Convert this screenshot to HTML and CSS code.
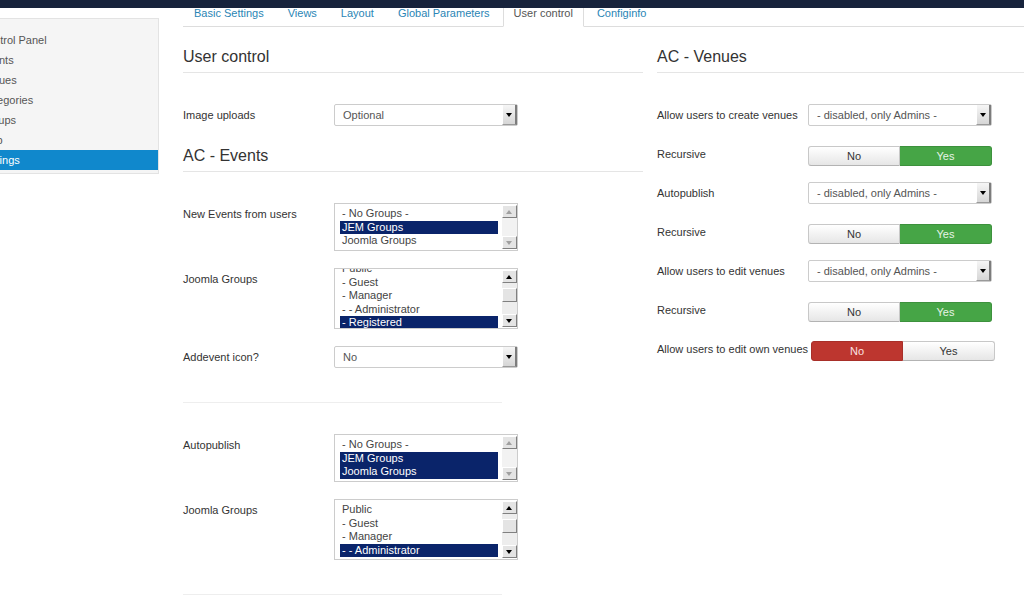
FILE: index.html
```html
<!DOCTYPE html>
<html lang="en">
<head>
    <meta charset="UTF-8">
    <title>JEM - Settings</title>
    <link rel="stylesheet" href="styles.css">
</head>
<body>

<div class="navbar"></div>

<div class="page">
    <div class="sidebar">
        <ul class="nav-list">
            <li>Control Panel</li>
            <li>Events</li>
            <li>Venues</li>
            <li>Categories</li>
            <li>Groups</li>
            <li>Help</li>
            <li class="active">Settings</li>
        </ul>
    </div>

    <div class="main">
        <ul class="tabs">
            <li>Basic Settings</li>
            <li>Views</li>
            <li>Layout</li>
            <li>Global Parameters</li>
            <li class="active">User control</li>
            <li>Configinfo</li>
        </ul>

        <div class="tab-content">
            <div class="col col-left">
                <h3>User control</h3>
                <div class="control-group">
                    <label class="control-label">Image uploads</label>
                    <div class="select"><span>Optional</span><b class="select-btn"></b></div>
                </div>

                <h3>AC - Events</h3>
                <div class="control-group">
                    <label class="control-label">New Events from users</label>
                    <div class="listbox short">
                        <div class="options">
                            <div>- No Groups -</div>
                            <div class="sel">JEM Groups</div>
                            <div>Joomla Groups</div>
                        </div>
                        <div class="scrollbar off">
                            <span class="sb-btn up"></span><span class="sb-track"></span><span class="sb-btn down"></span>
                        </div>
                    </div>
                </div>
                <div class="control-group">
                    <label class="control-label">Joomla Groups</label>
                    <div class="listbox tall">
                        <div class="options scrolled">
                            <div>Public</div>
                            <div>- Guest</div>
                            <div>- Manager</div>
                            <div>- - Administrator</div>
                            <div class="sel">- Registered</div>
                            <div>- - Author</div>
                        </div>
                        <div class="scrollbar">
                            <span class="sb-btn up"></span><span class="sb-track"><i class="thumb"></i></span><span class="sb-btn down"></span>
                        </div>
                    </div>
                </div>
                <div class="control-group">
                    <label class="control-label">Addevent icon?</label>
                    <div class="select"><span>No</span><b class="select-btn"></b></div>
                </div>

                <hr>

                <div class="control-group">
                    <label class="control-label">Autopublish</label>
                    <div class="listbox short">
                        <div class="options">
                            <div>- No Groups -</div>
                            <div class="sel">JEM Groups</div>
                            <div class="sel">Joomla Groups</div>
                        </div>
                        <div class="scrollbar off">
                            <span class="sb-btn up"></span><span class="sb-track"></span><span class="sb-btn down"></span>
                        </div>
                    </div>
                </div>
                <div class="control-group">
                    <label class="control-label">Joomla Groups</label>
                    <div class="listbox tall">
                        <div class="options">
                            <div>Public</div>
                            <div>- Guest</div>
                            <div>- Manager</div>
                            <div class="sel">- - Administrator</div>
                            <div>- Registered</div>
                        </div>
                        <div class="scrollbar">
                            <span class="sb-btn up"></span><span class="sb-track"><i class="thumb"></i></span><span class="sb-btn down"></span>
                        </div>
                    </div>
                </div>

                <hr>
            </div>

            <div class="col col-right">
                <h3>AC - Venues</h3>
                <div class="control-group">
                    <label class="control-label">Allow users to create venues</label>
                    <div class="select"><span>- disabled, only Admins -</span><b class="select-btn"></b></div>
                </div>
                <div class="control-group">
                    <label class="control-label">Recursive</label>
                    <div class="toggle"><span class="btn">No</span><span class="btn yes">Yes</span></div>
                </div>
                <div class="control-group">
                    <label class="control-label">Autopublish</label>
                    <div class="select"><span>- disabled, only Admins -</span><b class="select-btn"></b></div>
                </div>
                <div class="control-group">
                    <label class="control-label">Recursive</label>
                    <div class="toggle"><span class="btn">No</span><span class="btn yes">Yes</span></div>
                </div>
                <div class="control-group">
                    <label class="control-label">Allow users to edit venues</label>
                    <div class="select"><span>- disabled, only Admins -</span><b class="select-btn"></b></div>
                </div>
                <div class="control-group">
                    <label class="control-label">Recursive</label>
                    <div class="toggle"><span class="btn">No</span><span class="btn yes">Yes</span></div>
                </div>
                <div class="control-group">
                    <label class="control-label">Allow users to edit own venues</label>
                    <div class="toggle"><span class="btn no">No</span><span class="btn">Yes</span></div>
                </div>
            </div>
        </div>
    </div>
</div>

</body>
</html>
```

FILE: styles.css
```css
body {
    margin: 0;
    height: 595px;
    overflow: hidden;
    font-family: "Liberation Sans", Arial, sans-serif;
    font-size: 11px;
    color: #333;
    background: #fff;
}
.navbar {
    height: 8px;
    background: #17233c;
}
.page {
    display: flex;
    align-items: flex-start;
}

/* sidebar, page is scrolled a bit to the right */
.sidebar {
    flex: none;
    box-sizing: border-box;
    width: 199px;
    margin: 10px 0 0 -40px;
    padding: 11px 0 3px;
    background: #f5f5f5;
    border: 1px solid #e3e3e3;
}
.nav-list {
    list-style: none;
    margin: 0;
    padding: 0;
}
.nav-list li {
    padding-left: 19px;
    line-height: 20px;
    color: #555;
}
.nav-list li.active {
    background: #1088cc;
    color: #fff;
}

.main {
    flex: 1;
    padding-left: 24px;
}
.tabs {
    display: flex;
    list-style: none;
    margin: 0;
    padding: 0;
    border-bottom: 1px solid #ddd;
}
.tabs li {
    padding: 0 10px 8px;
    margin: 0 2px -1px 0;
    line-height: 10px;
    color: #2a85b5;
    border: 1px solid transparent;
    border-top: 0;
}
.tabs li.active {
    color: #555;
    background: #fff;
    border-color: #ddd;
    border-bottom-color: #fff;
}

.tab-content {
    display: flex;
    gap: 14px;
}
.col-left {
    width: 460px;
}
.col-right {
    flex: 1;
}
.col h3 {
    margin: 20px 0 31px;
    padding-bottom: 5px;
    font-size: 16px;
    font-weight: normal;
    line-height: 20px;
    color: #333;
    border-bottom: 1px solid #e5e5e5;
}
.col hr {
    width: 319px;
    margin: 34px 0 31px;
    border: 0;
    border-top: 1px solid #eee;
}
.col hr:last-child {
    margin-bottom: 0;
}

.control-group {
    display: flex;
    align-items: flex-start;
    margin-bottom: 17px;
}
.control-label {
    flex: none;
    box-sizing: border-box;
    min-width: 151px;
    padding-right: 3px;
    line-height: 22px;
    white-space: nowrap;
}

.select {
    display: flex;
    box-sizing: border-box;
    width: 184px;
    height: 22px;
    border: 1px solid #ccc;
    border-radius: 2px;
    background: #fff;
    color: #555;
}
.select span {
    flex: 1;
    padding-left: 8px;
    line-height: 20px;
}
.select-btn {
    position: relative;
    width: 12px;
    background: linear-gradient(#f6f6f6, #d6d6d6);
    border-left: 1px solid #fff;
    border-right: 2px solid #7c7c7c;
    border-bottom: 1px solid #9a9a9a;
}
.select-btn::after {
    content: "";
    position: absolute;
    left: 3px;
    top: 8px;
    border-top: 4px solid #000;
    border-left: 3px solid transparent;
    border-right: 3px solid transparent;
}

.listbox {
    display: flex;
    box-sizing: border-box;
    width: 184px;
    padding-left: 5px;
    border: 1px solid #ccc;
    background: #fff;
}
.listbox.short {
    height: 48px;
}
.listbox.tall {
    height: 61px;
}
.options {
    flex: 1;
    margin-right: 4px;
    padding-top: 3px;
    overflow: hidden;
    color: #444;
    line-height: 13.5px;
}
.options div {
    padding-left: 2px;
    white-space: nowrap;
}
.options.scrolled div:first-child {
    margin-top: -10px;
}
.options .sel {
    background: #0a246a;
    color: #fff;
}

.scrollbar {
    display: flex;
    flex-direction: column;
    width: 15px;
    margin: 1px 0;
}
.sb-track {
    flex: 1;
    background: #ededed;
}
.sb-btn {
    position: relative;
    box-sizing: border-box;
    height: 13px;
    background: #e4e4e4;
    border: 1px solid;
    border-color: #fff #808080 #808080 #fff;
}
.sb-btn::after {
    content: "";
    position: absolute;
    left: 3px;
    top: 4px;
    border-left: 3px solid transparent;
    border-right: 3px solid transparent;
}
.sb-btn.up::after {
    border-bottom: 4px solid #000;
}
.sb-btn.down::after {
    border-top: 4px solid #000;
}
.scrollbar.off .sb-btn.up::after {
    border-bottom-color: #a0a0a0;
}
.scrollbar.off .sb-btn.down::after {
    border-top-color: #a0a0a0;
}
.scrollbar.off .sb-track {
    background: #f2f2f2;
}
.thumb {
    display: block;
    box-sizing: border-box;
    height: 14px;
    margin-top: 5px;
    background: #e4e4e4;
    border: 1px solid;
    border-color: #fff #808080 #808080 #fff;
}

.toggle {
    display: flex;
    margin: 3px 0 -1px;
}
.toggle .btn {
    box-sizing: border-box;
    width: 92px;
    height: 20px;
    line-height: 18px;
    text-align: center;
    color: #333;
    background: linear-gradient(#fff, #e6e6e6);
    border: 1px solid #c8c8c8;
    border-bottom-color: #b3b3b3;
}
.toggle .btn:first-child {
    border-radius: 3px 0 0 3px;
}
.toggle .btn:last-child {
    border-left: 0;
    border-radius: 0 3px 3px 0;
}
.toggle .btn.yes {
    background: #46a546;
    border-color: #3d913d;
    color: #e6f4e6;
}
.toggle .btn.no {
    background: #bd362f;
    border-color: #a82f29;
    color: #fbe1e1;
}
```
